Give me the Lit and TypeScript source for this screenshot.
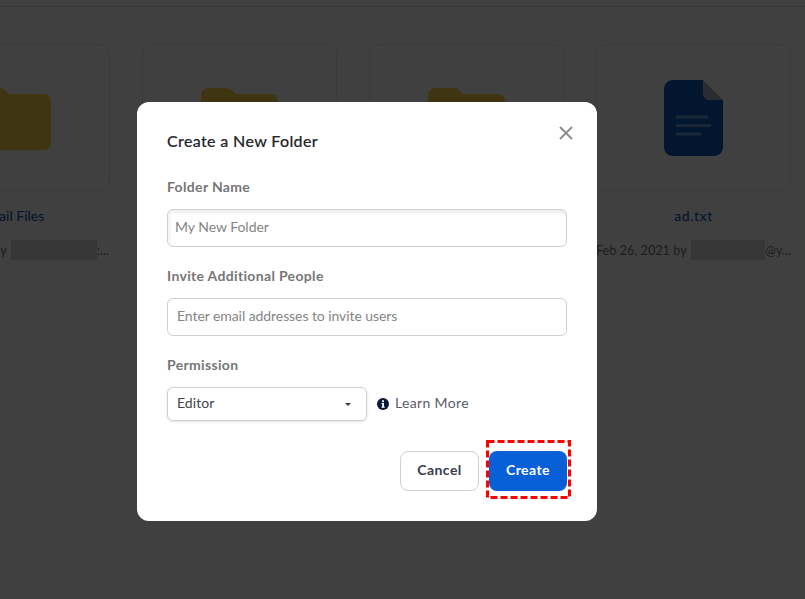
import { LitElement, html, css } from "lit";
import { customElement } from "lit/decorators.js";

const folder = html`<svg class="folder" viewBox="0 0 77 62" aria-hidden="true"><path fill="#fdd44e" d="M7 0H25C28 0 30 1 32 3L35 6H70C74 6 77 9 77 13V55C77 59 74 62 70 62H7C3 62 0 59 0 55V7C0 3 3 0 7 0Z"/></svg>`;
const doc = html`<svg class="doc" viewBox="0 0 59 76" aria-hidden="true">
  <path fill="#0859bd" d="M9 0H39V13C39 17 42 20 46 20H59V67C59 72 55 76 50 76H9C4 76 0 72 0 67V9C0 4 4 0 9 0Z"/>
  <path fill="#a8b0c2" d="M39 0L59 20H46C42 20 39 17 39 13Z"/>
  <path stroke="#fff" stroke-opacity=".4" stroke-width="3" stroke-linecap="round" d="M13 37H43M13 45.500H46M13 54H36"/>
</svg>`;

@customElement("app-root")
export class AppRoot extends LitElement {
  static styles = css`
    :host {
      display: block;
      position: relative;
      height: 100vh;
      overflow: hidden;
      background: #fff;
      font-family: Lato, "Open Sans", sans-serif;
      color: #232333;
    }
    .topbar { height: 6px; border-bottom: 1px solid #e4e4ea; }
    .grid {
      display: flex;
      gap: 32px;
      margin: 37px 0 0 -85px;
    }
    .item { flex: 0 0 195px; width: 195px; }
    .card {
      box-sizing: border-box;
      height: 147px;
      border: 1px solid #e6e6ea;
      border-radius: 10px;
      display: flex;
      align-items: center;
      justify-content: center;
    }
    .folder { width: 77px; height: 62px; display: block; margin: 3px 1px 0 0; }
    .doc { width: 59px; height: 76px; display: block; margin-top: 1px; }
    .name {
      margin-top: 15px;
      padding-right: 1px;
      text-align: center;
      font-size: 14px;
      line-height: 20px;
      color: #0a50ac;
    }
    .name.wide { letter-spacing: 0.6px; padding-right: 0; }
    .meta {
      margin-top: 14px;
      display: flex;
      align-items: center;
      justify-content: center;
      white-space: nowrap;
      font-size: 12.700px;
      line-height: 20px;
      color: #747487;
    }
    .redact { display: inline-block; width: 86px; height: 20px; margin-left: 4px; background: #dcdcdc; }
    .overlay {
      position: absolute;
      inset: 0;
      background: rgba(0, 0, 0, 0.75);
    }
    .modal {
      position: absolute;
      left: 137px;
      top: 102px;
      box-sizing: border-box;
      width: 460px;
      height: 419px;
      padding: 30px;
      background: #fff;
      border-radius: 12px;
      display: flex;
      flex-direction: column;
    }
    .title {
      font-size: 16px;
      line-height: 18px;
      font-weight: 500;
      color: #26262b;
      letter-spacing: 0.36px;
      -webkit-text-stroke: 0.15px #26262b;
    }
    .close {
      position: absolute;
      right: 24px;
      top: 24px;
      width: 14px;
      height: 14px;
      display: block;
    }
    .label {
      margin-top: 19px;
      font-size: 14px;
      line-height: 20px;
      font-weight: 700;
      color: #767676;
      letter-spacing: 0.33px;
    }
    .label.first { margin-top: 27px; }
    .input {
      box-sizing: border-box;
      margin-top: 12px;
      width: 400px;
      height: 38px;
      border: 1px solid #cfcfd4;
      border-radius: 6px;
      padding: 0 9px 4px;
      display: flex;
      align-items: center;
      font-size: 14px;
      color: #858585;
      letter-spacing: -0.07px;
    }
    .input.shaded {
      padding-left: 7px;
      box-shadow: inset 0 3px 0 #f1f1f2, inset 3px 0 0 #f6f6f7;
      letter-spacing: -0.03px;
    }
    .perm {
      margin-top: 12px;
      display: flex;
      align-items: center;
    }
    .select {
      box-sizing: border-box;
      width: 200px;
      height: 34px;
      border: 1px solid #cfcfd4;
      border-radius: 6px;
      box-shadow: 0 1px 3px rgba(0, 0, 0, 0.12);
      padding: 0 15px 4px 9px;
      display: flex;
      align-items: center;
      justify-content: space-between;
      font-size: 14px;
      color: #444448;
      letter-spacing: 0.05px;
    }
    .caret {
      width: 0;
      height: 0;
      margin-top: 4px;
      border-left: 3px solid transparent;
      border-right: 3px solid transparent;
      border-top: 3px solid #39394d;
    }
    .info { width: 12px; height: 12px; margin-left: 10px; display: block; }
    .learn {
      margin-left: 6px;
      padding-bottom: 4px;
      font-size: 14px;
      color: #5c5c66;
      letter-spacing: 0.35px;
    }
    .actions {
      margin-top: 30px;
      display: flex;
      justify-content: flex-end;
      gap: 10px;
    }
    .btn {
      box-sizing: border-box;
      height: 40px;
      padding-bottom: 4px;
      border-radius: 8px;
      display: flex;
      align-items: center;
      justify-content: center;
      font-size: 14px;
      font-weight: 700;
      letter-spacing: 0.45px;
    }
    .cancel { width: 79px; border: 1px solid #cfcfd4; color: #39394d; background: #fff; }
    .create { position: relative; width: 78px; background: #0960d6; color: #fff; }
    .mark {
      position: absolute;
      left: -3px;
      top: -11px;
      width: 85px;
      height: 59px;
      display: block;
      overflow: visible;
    }
  `;

  render() {
    return html`
      <div class="topbar"></div>
      <div class="grid">
        <div class="item">
          <div class="card">${folder}</div>
          <div class="name">Email Files</div>
          <div class="meta">Feb 26, 2021 by<span class="redact"></span>:...</div>
        </div>
        <div class="item"><div class="card">${folder}</div></div>
        <div class="item"><div class="card">${folder}</div></div>
        <div class="item">
          <div class="card">${doc}</div>
          <div class="name wide">ad.txt</div>
          <div class="meta">Feb 26, 2021 by<span class="redact"></span>@y...</div>
        </div>
      </div>
      <div class="overlay"></div>
      <div class="modal" role="dialog">
        <div class="title">Create a New Folder</div>
        <svg class="close" viewBox="0 0 14 14" aria-label="Close"><path d="M1 1L13 13M13 1L1 13" stroke="#8f8f8f" stroke-width="2" fill="none"/></svg>
        <div class="label first">Folder Name</div>
        <div class="input shaded">My New Folder</div>
        <div class="label">Invite Additional People</div>
        <div class="input">Enter email addresses to invite users</div>
        <div class="label">Permission</div>
        <div class="perm">
          <div class="select">Editor<span class="caret"></span></div>
          <svg class="info" viewBox="0 0 12 12" aria-hidden="true">
            <circle cx="6" cy="6" r="6" fill="#0b1a33"/>
            <rect x="5" y="2.300" width="2" height="1.800" fill="#fff"/>
            <path fill="#fff" d="M4.500 5H7V8.700H7.800V9.800H4.400V8.700H5.200V6H4.500Z"/>
          </svg>
          <span class="learn">Learn More</span>
        </div>
        <div class="actions">
          <div class="btn cancel">Cancel</div>
          <div class="btn create">Create
            <svg class="mark" viewBox="0 0 85 59" aria-hidden="true"><rect x="1.500" y="1.500" width="82" height="56" fill="none" stroke="#f00" stroke-width="3" stroke-dasharray="7 3"/></svg>
          </div>
        </div>
      </div>
    `;
  }
}
